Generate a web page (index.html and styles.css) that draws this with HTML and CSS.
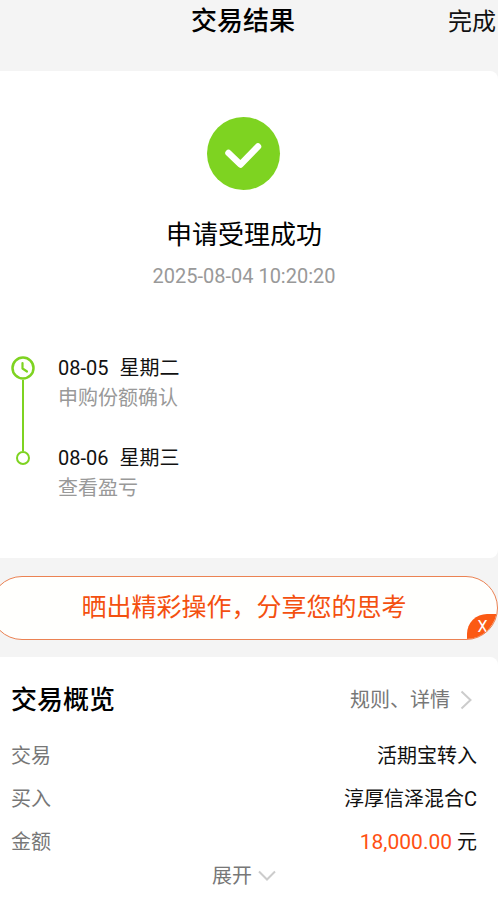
FILE: index.html
```html
<!DOCTYPE html>
<html lang="zh-CN">
<head>
<meta charset="utf-8">
<meta name="viewport" content="width=device-width, initial-scale=1">
<title>交易结果</title>
<link rel="stylesheet" href="styles.css">
</head>
<body>
<div class="page">
  <header class="topbar">
    <h1 class="heading">交易结果</h1>
    <button class="done" type="button">完成</button>
  </header>

  <main>
    <section class="card result">
      <svg class="result-icon" viewBox="0 0 74 74" aria-hidden="true">
        <circle cx="36.500" cy="36.500" r="36.500" fill="#7ed321"/>
        <path d="M21.500 36L33.500 47.500L51 29.500" fill="none" stroke="#fff" stroke-width="6.500" stroke-linecap="round" stroke-linejoin="round"/>
      </svg>
      <h2 class="result-title">申请受理成功</h2>
      <time class="result-time">2025-08-04 10:20:20</time>
      <ol class="steps">
        <li class="step">
          <div class="rail">
            <svg class="clock" viewBox="0 0 24 24" aria-hidden="true">
              <circle cx="12" cy="12" r="10.500" fill="none" stroke="#7ed321" stroke-width="2.500"/>
              <path d="M11.500 7V12.500L16 15.500" fill="none" stroke="#7ed321" stroke-width="2.200" stroke-linecap="round" stroke-linejoin="round"/>
            </svg>
            <span class="line"></span>
          </div>
          <div class="step-text">
            <p class="step-date"><span>08-05</span><span>星期二</span></p>
            <p class="step-note">申购份额确认</p>
          </div>
        </li>
        <li class="step">
          <div class="rail"><span class="dot"></span></div>
          <div class="step-text">
            <p class="step-date"><span>08-06</span><span>星期三</span></p>
            <p class="step-note">查看盈亏</p>
          </div>
        </li>
      </ol>
    </section>

    <aside class="banner">
      <a class="banner-link" href="#share">晒出精彩操作，分享您的思考</a>
      <button class="banner-close" type="button" aria-label="关闭">X</button>
    </aside>

    <section class="card overview">
      <div class="overview-head">
        <h2 class="heading">交易概览</h2>
        <a class="more" href="#rules">规则、详情
          <svg class="chevron-right" viewBox="0 0 12 20" aria-hidden="true"><path d="M1.500 1.500L10.500 10L1.500 18.500" fill="none" stroke="#ccc" stroke-width="2"/></svg>
        </a>
      </div>
      <dl class="details">
        <div class="row"><dt>交易</dt><dd>活期宝转入</dd></div>
        <div class="row"><dt>买入</dt><dd>淳厚信泽混合C</dd></div>
        <div class="row"><dt>金额</dt><dd><span class="amount">18,000.00</span> 元</dd></div>
      </dl>
      <button class="expand" type="button">展开
        <svg class="chevron-down" viewBox="0 0 18 12" aria-hidden="true"><path d="M1 1.500L9 9.500L17 1.500" fill="none" stroke="#ccc" stroke-width="2"/></svg>
      </button>
    </section>
  </main>
</div>
</body>
</html>
```
FILE: styles.css
```css
* {
  box-sizing: border-box;
}

body {
  margin: 0;
  overflow-x: hidden;
  background: #f4f4f4;
  color: #111;
  font-family: Roboto, "Noto Sans CJK SC", sans-serif;
  font-size: 20px;
  line-height: 30px;
}

h1, h2, p, ol, dl, dd {
  margin: 0;
  padding: 0;
}

button {
  padding: 0;
  border: 0;
  background: none;
  color: inherit;
  font: inherit;
  cursor: pointer;
}

a {
  color: inherit;
  text-decoration: none;
}

.page {
  display: flex;
  flex-direction: column;
  min-height: 100vh;
  margin-left: -10px;
}

main {
  display: flex;
  flex: 1;
  flex-direction: column;
}

.topbar {
  display: grid;
  grid-template-columns: 1fr auto 1fr;
  align-items: center;
  padding: 0 2px 28px 0;
}

.heading {
  color: #000;
  font-size: 26px;
  font-weight: 500;
  line-height: 42px;
}

.topbar .heading {
  grid-column: 2;
  line-height: 43px;
}

.done {
  justify-self: end;
  font-size: 24px;
}

.card {
  border-radius: 8px;
  background: #fff;
}

.result {
  display: flex;
  flex-direction: column;
  align-items: center;
  padding: 46px 20px 55px;
}

.result-icon {
  width: 74px;
  height: 74px;
}

.result-title {
  margin-top: 24px;
  color: #000;
  font-size: 26px;
  font-weight: 400;
  line-height: 40px;
}

.result-time {
  margin-top: 6px;
  color: #999;
}

.steps {
  align-self: stretch;
  margin-top: 62px;
  list-style: none;
}

.step {
  display: flex;
  gap: 22px;
}

.step + .step {
  margin-top: 30px;
}

.rail {
  display: flex;
  flex-direction: column;
  align-items: center;
  width: 26px;
  padding-top: 3px;
}

.clock {
  width: 24px;
  height: 24px;
}

.line {
  flex: 1;
  width: 2px;
  margin-bottom: -38px;
  background: #7ed321;
}

.dot {
  width: 14px;
  height: 14px;
  margin-top: 5px;
  border: 2px solid #7ed321;
  border-radius: 50%;
}

.step-date {
  display: flex;
  gap: 11px;
}

.step-note {
  color: #999;
}

.banner {
  position: relative;
  margin: 18px 0 17px;
  overflow: hidden;
  border: 1px solid #eb8253;
  border-radius: 32px;
  background: #fffffd;
}

.banner-link {
  display: block;
  padding: 11px 0;
  color: #f4500f;
  font-size: 25px;
  line-height: 40px;
  text-align: center;
}

.banner-close {
  position: absolute;
  right: -1px;
  bottom: -1px;
  width: 31px;
  height: 26px;
  border-radius: 20px 0 0 0;
  background: #fb5a14;
  color: #fff;
  font-size: 16px;
  line-height: 26px;
}

.overview {
  flex: 1;
  padding: 22px 21px 12px;
  border-radius: 8px 8px 0 0;
}

.overview-head,
.row {
  display: flex;
  align-items: center;
  justify-content: space-between;
}

.more {
  display: flex;
  align-items: center;
  gap: 10px;
  padding-right: 5px;
  color: #777;
}

.chevron-right {
  width: 12px;
  height: 20px;
}

.details {
  display: grid;
  gap: 13px;
  margin-top: 20px;
}

.row dt {
  color: #777;
}

.amount {
  color: #ff5012;
  font-size: 21px;
}

.expand {
  display: flex;
  align-items: center;
  gap: 6px;
  margin: 4px auto 0;
  color: #777;
}

.chevron-down {
  width: 18px;
  height: 12px;
}
```
